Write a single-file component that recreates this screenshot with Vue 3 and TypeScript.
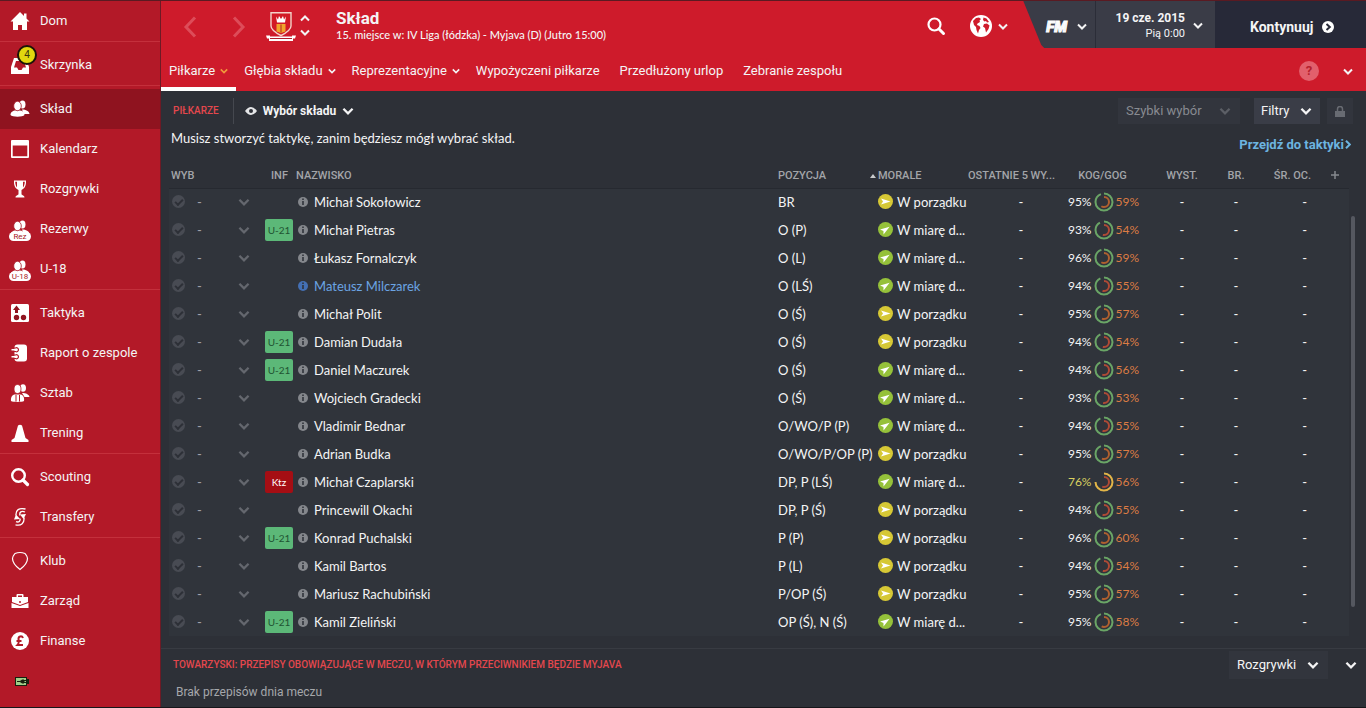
<script setup lang="ts">
import { ref } from 'vue'

interface NavItem {
  label: string
  icon: string
  tag?: string
  badge?: number
}

interface Player {
  name: string
  pos: string
  good: boolean
  cond: number
  sharp: number
  tag?: string
  link?: boolean
}

const navGroups: NavItem[][] = [
  [{ label: 'Dom', icon: 'home' }],
  [{ label: 'Skrzynka', icon: 'inbox', badge: 4 }],
  [
    { label: 'Skład', icon: 'people' },
    { label: 'Kalendarz', icon: 'calendar' },
    { label: 'Rozgrywki', icon: 'cup' },
    { label: 'Rezerwy', icon: 'people', tag: 'Rez' },
    { label: 'U-18', icon: 'people', tag: 'U-18' },
  ],
  [
    { label: 'Taktyka', icon: 'tactics' },
    { label: 'Raport o zespole', icon: 'report' },
    { label: 'Sztab', icon: 'staff' },
    { label: 'Trening', icon: 'cone' },
  ],
  [
    { label: 'Scouting', icon: 'search' },
    { label: 'Transfery', icon: 'transfer' },
  ],
  [
    { label: 'Klub', icon: 'shield' },
    { label: 'Zarząd', icon: 'case' },
    { label: 'Finanse', icon: 'pound' },
  ],
]

const tabs = [
  { label: 'Piłkarze', menu: true },
  { label: 'Głębia składu', menu: true },
  { label: 'Reprezentacyjne', menu: true },
  { label: 'Wypożyczeni piłkarze', menu: false },
  { label: 'Przedłużony urlop', menu: false },
  { label: 'Zebranie zespołu', menu: false },
]

const players = ref<Player[]>([
  { name: 'Michał Sokołowicz', pos: 'BR', good: false, cond: 95, sharp: 59 },
  { name: 'Michał Pietras', pos: 'O (P)', good: true, cond: 93, sharp: 54, tag: 'U-21' },
  { name: 'Łukasz Fornalczyk', pos: 'O (L)', good: true, cond: 96, sharp: 59 },
  { name: 'Mateusz Milczarek', pos: 'O (LŚ)', good: true, cond: 94, sharp: 55, link: true },
  { name: 'Michał Polit', pos: 'O (Ś)', good: false, cond: 95, sharp: 57 },
  { name: 'Damian Dudała', pos: 'O (Ś)', good: false, cond: 94, sharp: 54, tag: 'U-21' },
  { name: 'Daniel Maczurek', pos: 'O (Ś)', good: true, cond: 94, sharp: 56, tag: 'U-21' },
  { name: 'Wojciech Gradecki', pos: 'O (Ś)', good: true, cond: 93, sharp: 53 },
  { name: 'Vladimir Bednar', pos: 'O/WO/P (P)', good: true, cond: 94, sharp: 55 },
  { name: 'Adrian Budka', pos: 'O/WO/P/OP (P)', good: false, cond: 95, sharp: 57 },
  { name: 'Michał Czaplarski', pos: 'DP, P (LŚ)', good: true, cond: 76, sharp: 56, tag: 'Ktz' },
  { name: 'Princewill Okachi', pos: 'DP, P (Ś)', good: false, cond: 94, sharp: 55 },
  { name: 'Konrad Puchalski', pos: 'P (P)', good: false, cond: 96, sharp: 60, tag: 'U-21' },
  { name: 'Kamil Bartos', pos: 'P (L)', good: false, cond: 94, sharp: 54 },
  { name: 'Mariusz Rachubiński', pos: 'P/OP (Ś)', good: false, cond: 95, sharp: 57 },
  { name: 'Kamil Zieliński', pos: 'OP (Ś), N (Ś)', good: true, cond: 95, sharp: 58, tag: 'U-21' },
])

const down = 'M1 1.5 5 5.5 9 1.5'
</script>

<template>
  <div class="app">
    <nav class="side" aria-label="Menu">
      <ul v-for="(group, g) in navGroups" :key="g" class="group">
        <li v-for="item in group" :key="item.label">
          <a href="#" class="nav" :class="{ active: item.label === 'Skład' }">
            <span class="nav-icon">
              <svg width="24" height="24" viewBox="0 0 24 24" fill="#fff" aria-hidden="true">
                <path v-if="item.icon === 'home'" d="M12 3 2.500 12.500H5V21h5v-5h4v5h5v-8.500h2.500L18.500 9.500V4.500h-2.500V7z" />
                <path v-else-if="item.icon === 'inbox'" fill-rule="evenodd" d="M6 5h12l3 9v7H3v-7zm2 3-2 6.500h3l1.500 2.500h3l1.500-2.500h3L16 8z" />
                <g v-else-if="item.icon === 'people'">
                  <ellipse cx="14.500" cy="7.500" rx="3" ry="4" />
                  <path d="M14 12.500c4 0 7 1.500 7.500 4.500h-6z" />
                  <ellipse cx="9.500" cy="9" rx="3.800" ry="4.700" stroke="#a81826" stroke-width="0.800" />
                  <path d="M2.500 18c0-3 2.500-4.500 5-4.500l2 .7 2-.7c3 0 5 1.500 5 4.500-1.500 2.300-12.500 2.300-14 0z" />
                </g>
                <path v-else-if="item.icon === 'calendar'" fill-rule="evenodd" d="M4 3h16q1 0 1 1v16q0 1-1 1H4q-1 0-1-1V4q0-1 1-1zm.7 5.500V19.300h14.600V8.500z" />
                <path v-else-if="item.icon === 'cup'" fill-rule="evenodd" d="M6 3.500h12c.3 5-1.200 8-4.500 9.500v4c0 1.500 3 1 3 3.500h-9c0-2.500 3-2 3-3.500v-4C7.200 11.500 5.700 8.500 6 3.500zm1.200 1.200c.2 2.800.8 4.600 1.800 5.800V4.700zm7.800 0v5.800c1-1.200 1.600-3 1.800-5.800z" />
                <g v-else-if="item.icon === 'tactics'">
                  <rect x="3" y="3" width="18" height="18" rx="1.500" />
                  <path fill="#8f1420" d="M8.500 4.500 12 9h-2v3H7V9H5z" />
                  <circle cx="8.500" cy="16.500" r="2.700" fill="#8f1420" />
                  <circle cx="15.500" cy="16.500" r="2.700" fill="#8f1420" />
                </g>
                <g v-else-if="item.icon === 'report'">
                  <rect x="6.500" y="3.500" width="12.500" height="17" rx="3" />
                  <path d="M6 7h1.500a2 2 0 1 1 0 3.500H6M6 14h1.500a2 2 0 1 1 0 3.500H6" fill="none" stroke="#b31928" stroke-width="1.200" />
                  <path d="M3.500 8.700h4.500M3.500 15.700h4.500" stroke="#fff" stroke-width="1.500" />
                </g>
                <g v-else-if="item.icon === 'staff'">
                  <ellipse cx="15" cy="7" rx="3" ry="3.800" />
                  <path d="M14 12c4 0 7 1.500 7.500 4h-5z" />
                  <ellipse cx="9.500" cy="8" rx="3.500" ry="4.500" stroke="#b31928" stroke-width="0.800" />
                  <path d="M3 20c-.5-4 1.500-6.500 4-6.500h5c3 0 4.500 2.500 4 6.500-2 1.200-11 1.200-13 0z" />
                  <path d="M8 14v6.500M11.500 14v6.500" stroke="#b31928" />
                </g>
                <path v-else-if="item.icon === 'cone'" d="M10 4.500q2-1.500 4 0L17.500 17l3 2v2h-17v-2l3-2z" />
                <g v-else-if="item.icon === 'search'" fill="none" stroke="#fff">
                  <circle cx="10.500" cy="10.500" r="6.300" stroke-width="2.400" />
                  <path d="m15 15 4.500 4.500" stroke-width="3.200" stroke-linecap="round" />
                </g>
                <g v-else-if="item.icon === 'transfer'">
                  <path d="M17.500 4C11 2.500 7.500 5 8 10.500M7.500 19.800c6 1.300 9-1.800 8.500-7.300M17 7c-3.500-1.500-6 0-5 3.500M8 16.700c3 1 4.500-.7 4-3" fill="none" stroke="#fff" stroke-width="1.300" />
                  <path d="m6 14.500 2-5 4 4.500zM18 9l-2.500 5L12 9.500z" />
                </g>
                <path v-else-if="item.icon === 'shield'" d="M12 20.500C8 17.500 4.500 14 4.500 9.500 4.500 7 6 6 7 4.500Q12 2.500 17 4.500c1 1.500 2.500 2.500 2.500 5 0 4.500-3.500 8-7.500 11z" fill="none" stroke="#fff" stroke-width="1.200" />
                <g v-else-if="item.icon === 'case'">
                  <path fill-rule="evenodd" d="M8.500 8V6q0-1 1-1h5q1 0 1 1v2H20v5l-8 3-8-3V8zm1.500 0h4V6.500h-4z" />
                  <path d="m3.500 14 8.500 3 8.500-3V19h-17z" />
                  <circle cx="12" cy="13" r="1" fill="#b31928" />
                </g>
                <g v-else>
                  <circle cx="12" cy="12" r="9" />
                  <path d="M15 9c-1-2.500-4.500-2-4.500.7 0 2 1.300 4-1 6.300H15M8.500 12h5" fill="none" stroke="#b31928" stroke-width="2" />
                </g>
              </svg>
              <b v-if="item.badge" class="badge">{{ item.badge }}</b>
              <span v-if="item.tag" class="pill">{{ item.tag }}</span>
            </span>
            <span>{{ item.label }}</span>
          </a>
        </li>
      </ul>
      <svg class="battery" width="14" height="9" viewBox="0 0 14 9" aria-hidden="true">
        <path d="M0 0h12v2h2v5h-2v2H0z" fill="#16200f" />
        <path d="M1 1h10v7H1z" fill="#9fce88" />
        <path d="M2 4.500h3M5 4.500 7 3h2v3H7zM9 3.500h2M9 5.500h2" stroke="#16200f" fill="#16200f" />
      </svg>
    </nav>

    <div class="content">
      <header class="head">
        <div class="top">
          <button class="arrow" aria-label="Wstecz">
            <svg width="14" height="22" viewBox="0 0 14 22"><path d="M12 1.500 3 11l9 9.500" /></svg>
          </button>
          <button class="arrow" aria-label="Dalej">
            <svg width="14" height="22" viewBox="0 0 14 22"><path d="m2 1.500 9 9.500-9 9.500" /></svg>
          </button>
          <svg class="crest" width="30" height="30" viewBox="0 0 30 30" aria-hidden="true">
            <path d="M5 .7h20V14c0 4-5 7-10 9.500C10 21 5 18 5 14z" fill="#d21a25" stroke="#f3d3c9" stroke-width="1.400" />
            <path d="m10 4.500 2 3 1-3.500 2 3 2-3 1 3.500 2-3-1 6h-8z" fill="#fff" />
            <path d="M10.500 12h9v7.500L15 21l-4.500-1.500z" fill="#f1a52a" />
            <path d="M15 12.500v8" stroke="#b3261e" />
            <path d="M0 23.500h4v1h22v-1h4l-1 3h-2v2.500H3v-2.500H1z" fill="#fff" />
            <path d="M4 26.500h22" stroke="#b31928" />
          </svg>
          <div class="updown">
            <button aria-label="Poprzedni"><svg width="10" height="7" viewBox="0 0 10 7"><path d="M1 5.500 5 1.500 9 5.500" /></svg></button>
            <button aria-label="Następny"><svg width="10" height="7" viewBox="0 0 10 7"><path :d="down" /></svg></button>
          </div>
          <div class="title">
            <h1>Skład</h1>
            <p>15. miejsce w: IV Liga (łódzka) - Myjava (D) (Jutro 15:00)</p>
          </div>
          <button class="tool" aria-label="Szukaj">
            <svg width="20" height="20" viewBox="0 0 20 20" fill="none" stroke="#fff">
              <circle cx="8.500" cy="8.500" r="6" stroke-width="2.200" />
              <path d="m13 13 4.500 4.500" stroke-width="3" stroke-linecap="round" />
            </svg>
          </button>
          <button class="tool globe" aria-label="Świat">
            <svg width="22" height="22" viewBox="0 0 22 22">
              <circle cx="11" cy="11" r="11" fill="#fff" />
              <path d="M3 6 6 3l3-.500 2 1.500-1.500 1.500L10 7 7.500 8.500 7 10l2.500 1 1 2-1.500 2-1 3.500L6.500 15 6 12 4 10zM13.500 2.500l3 1L19 7l-2 .5L16 6l-1.500.5L13 5zM14 9l3-.5 2.500 2L18.500 14l-2.500 3.500-1-4.500-2-1.500z" fill="#cf1b2b" />
            </svg>
            <svg class="chev" width="10" height="7" viewBox="0 0 10 7"><path :d="down" /></svg>
          </button>
          <div class="dock">
            <button class="fm">
              <i>FM</i>
              <svg class="chev" width="10" height="7" viewBox="0 0 10 7"><path :d="down" /></svg>
            </button>
            <button class="date">
              <span><b>19 cze. 2015</b><small>Pią 0:00</small></span>
              <svg class="chev" width="10" height="7" viewBox="0 0 10 7"><path :d="down" /></svg>
            </button>
            <button class="go">
              <b>Kontynuuj</b>
              <svg width="12" height="12" viewBox="0 0 12 12"><circle cx="6" cy="6" r="6" fill="#fff" /><path d="M4.500 3 7.800 6 4.500 9" fill="none" stroke="#272938" stroke-width="2" /></svg>
            </button>
          </div>
        </div>
        <div class="tabs">
          <a v-for="(t, i) in tabs" :key="t.label" href="#" class="tab" :class="{ on: i === 0, plain: !t.menu }">
            {{ t.label }}
            <svg v-if="t.menu" class="chev" width="8" height="6" viewBox="0 0 10 7"><path :d="down" /></svg>
          </a>
          <button class="help" aria-label="Pomoc">?</button>
          <button class="more" aria-label="Więcej"><svg class="chev" width="10" height="7" viewBox="0 0 10 7"><path :d="down" /></svg></button>
        </div>
      </header>

      <main class="main">
        <div class="bar">
          <h2>PIŁKARZE</h2>
          <button class="view">
            <svg width="12" height="8" viewBox="0 0 12 8"><path d="M0 4Q6-4 12 4 6 12 0 4z" fill="#e4e5e7" /><circle cx="6" cy="4" r="2" fill="#2d3037" /></svg>
            <b>Wybór składu</b>
            <svg class="chev" width="12" height="8" viewBox="0 0 10 7"><path :d="down" /></svg>
          </button>
          <div class="drop quick">
            <select disabled aria-label="Szybki wybór"><option>Szybki wybór</option></select>
            <svg class="chev" width="12" height="8" viewBox="0 0 10 7"><path :d="down" /></svg>
          </div>
          <button class="filter">
            Filtry
            <svg class="chev" width="12" height="8" viewBox="0 0 10 7"><path :d="down" /></svg>
          </button>
          <button class="lock" aria-label="Zablokuj">
            <svg width="10" height="11" viewBox="0 0 10 11"><path d="M2.500 5V3a2.500 2.500 0 0 1 5 0v2" fill="none" stroke="#686b72" stroke-width="1.500" /><rect y="5" width="10" height="6" fill="#686b72" /></svg>
          </button>
        </div>
        <div class="notice">
          <p>Musisz stworzyć taktykę, zanim będziesz mógł wybrać skład.</p>
          <a href="#">Przejdź do taktyki<svg width="6" height="9" viewBox="0 0 6 9"><path d="m1 .7 3.800 3.800L1 8.300" /></svg></a>
        </div>

        <div class="list">
          <table>
            <colgroup>
              <col class="c-sel" /><col class="c-inf" /><col /><col class="c-pos" /><col class="c-mor" /><col class="c-last" /><col class="c-kog" /><col class="c-app" /><col class="c-goal" /><col class="c-avg" /><col class="c-add" />
            </colgroup>
            <thead>
              <tr>
                <th>WYB</th>
                <th class="inf">INF</th>
                <th class="who">NAZWISKO</th>
                <th><span class="sorted">POZYCJA<i class="tri"></i></span></th>
                <th>MORALE</th>
                <th>OSTATNIE 5 WY...</th>
                <th class="mid">KOG/GOG</th>
                <th class="mid">WYST.</th>
                <th class="mid">BR.</th>
                <th class="avg">ŚR. OC.</th>
                <th><button class="add" aria-label="Dodaj kolumnę"><svg width="8" height="8" viewBox="0 0 8 8"><path d="M4 0v8M0 4h8" stroke="#85888e" stroke-width="1.500" /></svg></button></th>
              </tr>
            </thead>
            <tbody>
              <tr v-for="p in players" :key="p.name">
                <td>
                  <div class="pick">
                    <input type="checkbox" :aria-label="p.name" />
                    <button>-<svg class="chev" width="12" height="8" viewBox="0 0 10 7"><path :d="down" /></svg></button>
                  </div>
                </td>
                <td class="tagcell"><span v-if="p.tag" class="tag" :class="{ red: p.tag === 'Ktz' }">{{ p.tag }}</span></td>
                <td>
                  <a href="#" class="name" :class="{ link: p.link }">
                    <svg width="10" height="10" viewBox="0 0 10 10"><circle cx="5" cy="5" r="5" /><path d="M5 4v4M5 1.500v1.500" stroke="#30343b" stroke-width="1.600" /></svg>
                    {{ p.name }}
                  </a>
                </td>
                <td>{{ p.pos }}</td>
                <td>
                  <span class="morale">
                    <svg width="15" height="15" viewBox="0 0 15 15">
                      <circle cx="7.500" cy="7.500" r="7.500" :fill="p.good ? '#95c13a' : '#d6c835'" />
                      <path d="M3 4.500 12.500 7.500 3 10.500 5 7.500z" fill="#fff" :transform="p.good ? 'rotate(-35 7.500 7.500)' : undefined" />
                    </svg>
                    {{ p.good ? 'W miarę d...' : 'W porządku' }}
                  </span>
                </td>
                <td class="mid last">-</td>
                <td>
                  <span class="kog" :class="{ low: p.cond < 80 }">
                    {{ p.cond }}%
                    <svg width="20" height="20" viewBox="0 0 20 20" fill="none" stroke-width="2">
                      <circle class="outer" cx="10" cy="10" r="8.500" pathLength="100" :stroke-dasharray="`${p.cond - 1} 100`" transform="rotate(-90 10 10)" />
                      <circle cx="10" cy="10" r="5" :stroke="p.sharp > 56 ? '#b0602f' : '#b04a35'" pathLength="100" :stroke-dasharray="`${p.sharp} 100`" transform="rotate(-90 10 10)" />
                    </svg>
                    <em>{{ p.sharp }}%</em>
                  </span>
                </td>
                <td class="mid">-</td>
                <td class="mid">-</td>
                <td class="dash">-</td>
                <td></td>
              </tr>
            </tbody>
          </table>
          <div class="scroll"></div>
        </div>

        <footer class="foot">
          <div class="foot-row">
            <h2>TOWARZYSKI: PRZEPISY OBOWIĄZUJĄCE W MECZU, W KTÓRYM PRZECIWNIKIEM BĘDZIE MYJAVA</h2>
            <div class="drop">
              <select aria-label="Rozgrywki"><option>Rozgrywki</option></select>
              <svg class="chev" width="12" height="8" viewBox="0 0 10 7"><path :d="down" /></svg>
            </div>
            <button class="fold" aria-label="Zwiń"><svg class="chev" width="12" height="8" viewBox="0 0 10 7"><path :d="down" /></svg></button>
          </div>
          <p>Brak przepisów dnia meczu</p>
        </footer>
      </main>
    </div>
  </div>
</template>

<style>
body {
  background: #2d3037;
}
</style>

<style scoped>
* {
  box-sizing: border-box;
}
.app {
  display: flex;
  min-height: 100vh;
  border-top: 1px solid #5a1a22;
  border-bottom: 1px solid #15161a;
  background: #2d3037;
  color: #f4f4f5;
  font: 13px/16px Roboto, 'Liberation Sans', sans-serif;
}
button,
select {
  border: 0;
  padding: 0;
  background: none;
  color: inherit;
  font: inherit;
  appearance: none;
}
a {
  color: inherit;
  text-decoration: none;
}
h1,
h2,
p,
ul {
  margin: 0;
  padding: 0;
}
svg {
  flex: none;
}
.chev,
.updown svg {
  fill: none;
  stroke: currentColor;
  stroke-width: 2;
}

/* sidebar */
.side {
  flex: none;
  width: 161px;
  border-right: 1px solid #6d1a25;
  background: #b31928;
}
.group {
  list-style: none;
}
.group + .group {
  border-top: 1px solid #c4303c;
  padding-top: 3px;
}
.nav {
  display: flex;
  align-items: center;
  gap: 8px;
  height: 40px;
  padding-left: 8px;
}
.nav.active {
  background: #8f131f;
}
.nav-icon {
  position: relative;
  display: flex;
}
.badge {
  position: absolute;
  top: -8px;
  left: 9px;
  width: 20px;
  height: 20px;
  border: 2px solid #1c1408;
  border-radius: 50%;
  background: #e2d80f;
  color: #3a3510;
  font-size: 10px;
  font-weight: 400;
  line-height: 16px;
  text-align: center;
}
.pill {
  position: absolute;
  left: 1px;
  bottom: 0;
  width: 22px;
  height: 9px;
  border-radius: 5px;
  background: #fff;
  color: #a81826;
  font-size: 8px;
  line-height: 9px;
  text-align: center;
}
.battery {
  display: block;
  margin: 16px 0 0 15px;
}

/* header */
.content {
  flex: 1;
  min-width: 0;
  display: flex;
  flex-direction: column;
}
.head {
  background: #ce1b2b;
}
.top {
  display: flex;
  align-items: flex-start;
  height: 50px;
  padding-left: 22px;
}
.arrow {
  width: 14px;
  height: 22px;
  margin: 15px 35px 0 0;
}
.arrow svg {
  display: block;
  fill: none;
  stroke: #dd4c59;
  stroke-width: 3;
}
.arrow + .crest {
  margin: 11px 4px 0 -15px;
}
.updown {
  display: grid;
  gap: 7px;
  margin: 14px 26px 0 0;
}
.updown svg {
  display: block;
}
.title {
  flex: 1;
  min-width: 0;
  padding-top: 7px;
}
h1 {
  font-size: 17px;
  font-weight: 700;
  line-height: 20px;
}
.title p {
  font-family: Lato, Roboto, sans-serif;
  font-size: 11px;
  font-weight: 500;
  line-height: 14px;
}
.tool {
  display: flex;
  align-items: center;
  height: 50px;
  margin-right: 24px;
}
.globe {
  gap: 6px;
  margin-right: 15px;
}
.dock {
  display: flex;
  height: 47px;
  background: #3a3c47;
  clip-path: polygon(0 0, 100% 0, 100% 100%, 21px 100%, 18px 44px);
}
.dock button {
  display: flex;
  align-items: center;
}
.dock .fm {
  gap: 10px;
  padding: 4px 8px 0 23px;
  border-right: 1px solid #2b2d38;
}
.fm i {
  font-size: 15px;
  font-weight: 900;
  -webkit-text-stroke: 1px #fff;
}
.dock .date {
  gap: 8px;
  width: 119px;
  justify-content: flex-end;
  padding: 2px 12px 0 0;
}
.date span {
  display: grid;
  text-align: right;
}
.date b {
  font-size: 12px;
}
.date small {
  font-size: 11px;
}
.dock .go {
  gap: 9px;
  width: 151px;
  padding: 4px 0 0 35px;
  background: #272938;
}
.go b {
  font-size: 14px;
}
.tabs {
  display: flex;
  align-items: stretch;
  height: 40px;
}
.tab {
  display: flex;
  align-items: center;
  gap: 5px;
  padding: 4px 8px 0;
  border-bottom: 4px solid transparent;
}
.tab.plain {
  padding-right: 12px;
}
.tab.on {
  border-color: #fff;
}
.tab.on .chev {
  stroke: #f09a3c;
}
.help {
  align-self: center;
  width: 20px;
  height: 20px;
  margin-left: auto;
  border-radius: 50%;
  background: #e2606c;
  color: #b5202e;
  font-weight: 700;
}
.more {
  padding: 0 13px 0 24px;
}

/* toolbar */
.main {
  flex: 1;
  display: flex;
  flex-direction: column;
}
.bar {
  display: flex;
  align-items: center;
  height: 28px;
  margin-top: 6px;
  padding: 0 13px 0 12px;
}
h2 {
  color: #e4474d;
  font-size: 10px;
  font-weight: 500;
  line-height: 16px;
}
.view {
  display: flex;
  align-items: center;
  gap: 6px;
  height: 26px;
  margin-left: 14px;
  padding-left: 11px;
  border-left: 1px solid #45484f;
  font-size: 12px;
}
.drop {
  display: grid;
  align-items: center;
  background: #32353d;
}
.drop > * {
  grid-area: 1 / 1;
}
.drop select {
  height: 28px;
  padding: 0 31px 0 8px;
}
.drop .chev {
  justify-self: end;
  margin-right: 9px;
  pointer-events: none;
}
.quick {
  width: 122px;
  margin-left: auto;
  color: #888b91;
}
.quick .chev {
  color: #5c5f66;
}
.quick select {
  height: 26px;
  opacity: 1;
}
.filter {
  display: flex;
  align-items: center;
  justify-content: space-between;
  width: 66px;
  height: 26px;
  margin: 0 7px 0 14px;
  padding: 0 8px 0 7px;
  background: #3a3d47;
}
.lock {
  width: 26px;
  height: 26px;
  background: #32353d;
}
.lock svg {
  vertical-align: middle;
}
.notice {
  display: flex;
  justify-content: space-between;
  height: 39px;
  padding: 5px 15px 0 10px;
}
.notice p {
  font-family: Lato, Roboto, sans-serif;
}
.notice a {
  padding-top: 7px;
  color: #6cb4e0;
  font-weight: 700;
}
.notice svg {
  margin-left: 1px;
  fill: none;
  stroke: currentColor;
  stroke-width: 2;
}

/* table */
.list {
  display: flex;
  padding: 0 11px 12px 8px;
}
table {
  flex: 1;
  width: 100%;
  table-layout: fixed;
  border-collapse: collapse;
}
.c-sel { width: 96px; }
.c-inf { width: 31px; }
.c-pos { width: 100px; }
.c-mor { width: 90px; }
.c-last { width: 90px; }
.c-kog { width: 93px; }
.c-app { width: 66px; }
.c-goal { width: 42px; }
.c-avg { width: 60px; }
.c-add { width: 32px; }
th {
  height: 24px;
  padding: 0 0 0 2px;
  color: #a3a5a9;
  font-size: 11px;
  font-weight: 500;
  text-align: left;
  white-space: nowrap;
}
td {
  height: 28px;
  padding: 0 0 1px 2px;
  font-family: Lato, Roboto, sans-serif;
  white-space: nowrap;
}
tbody tr {
  background: #30343b;
}
thead tr {
  border-bottom: 1px solid #262930;
}
th.inf {
  padding-left: 6px;
}
th.who {
  padding-left: 0;
}
.sorted {
  display: flex;
  align-items: center;
  justify-content: space-between;
}
.tri {
  border: 3px solid transparent;
  border-top: 0;
  border-bottom: 4px solid #c9cacc;
}
.mid {
  padding-left: 0;
  text-align: center;
}
.last {
  padding-left: 20px;
}
th.avg {
  padding-right: 6px;
  text-align: right;
}
.dash {
  padding-right: 10px;
  text-align: right;
}
.add {
  display: block;
  margin-left: 12px;
}
.pick,
.pick button {
  display: flex;
  align-items: center;
}
.pick button {
  flex: 1;
  justify-content: space-between;
  margin-left: 11px;
  padding-right: 15px;
  color: #a0a2a7;
}
.pick .chev {
  color: #64676e;
}
.pick input {
  width: 13px;
  height: 13px;
  margin: 1px;
  border-radius: 50%;
  appearance: none;
  background: #484b53;
}
.pick input::after {
  content: '';
  display: block;
  width: 6px;
  height: 3px;
  margin: 4px 0 0 3px;
  border: solid #2d3037;
  border-width: 0 0 2px 2px;
  transform: rotate(-45deg);
}
.tagcell {
  padding: 0;
}
.tag {
  display: block;
  width: 28px;
  height: 22px;
  border-radius: 2px;
  background: #5cb878;
  color: #1f5433;
  font-size: 10px;
  line-height: 22px;
  text-align: center;
}
.tag.red {
  background: #a50e14;
  color: #fff;
}
.name {
  display: flex;
  align-items: center;
  gap: 6px;
}
.name svg {
  fill: #84878c;
}
.name.link {
  color: #6ba4e4;
}
.name.link svg {
  fill: #4470b4;
}
.morale {
  display: flex;
  align-items: center;
  gap: 4px;
}
.kog {
  display: flex;
  align-items: center;
  justify-content: center;
  gap: 2px;
  font-size: 12px;
}
.kog em {
  color: #dc7c44;
  font-style: normal;
}
.outer {
  stroke: #6aa566;
}
.low {
  color: #d8d060;
}
.low .outer {
  stroke: #e2b548;
}
.scroll {
  flex: none;
  width: 4px;
  margin: 52px 0 29px 2px;
  border-radius: 2px;
  background: #555860;
}

/* match rules */
.foot {
  flex: 1;
  border-top: 1px solid #383b42;
}
.foot-row {
  display: flex;
  align-items: center;
  padding: 2px 9px 0 12px;
}
.foot h2 {
  flex: 1;
}
.fold {
  margin-left: 17px;
}
.foot p {
  padding: 5px 15px;
  color: #a5a7ab;
  font-size: 12px;
}
</style>
